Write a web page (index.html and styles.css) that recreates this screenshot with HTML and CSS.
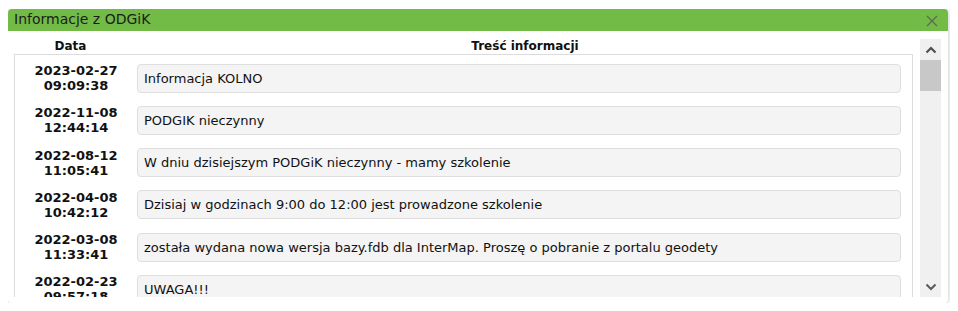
FILE: index.html
```html
<!DOCTYPE html>
<html lang="pl">

<head>
    <meta charset="UTF-8">
    <meta name="viewport" content="width=device-width, initial-scale=1.0">
    <title>Informacje z ODGiK</title>
    <link rel="stylesheet" href="styles.css">
</head>

<body>
    <div class="dialog">
        <div class="titlebar">
            <span class="title">Informacje z ODGiK</span>
            <span class="close">
                <svg width="12" height="12" viewBox="0 0 12 12">
                    <path d="M1 1 L11 11 M11 1 L1 11" stroke="#5d6b55" stroke-width="1.3" fill="none" />
                </svg>
            </span>
        </div>
        <div class="content">
            <div class="list">
                <div class="head">
                    <div class="head-date">Data</div>
                    <div class="head-text">Treść informacji</div>
                </div>
                <div class="rows">
                    <div class="row">
                        <div class="date">2023-02-27<br>09:09:38</div>
                        <div class="msg">Informacja KOLNO</div>
                    </div>
                    <div class="row">
                        <div class="date">2022-11-08<br>12:44:14</div>
                        <div class="msg">PODGIK nieczynny</div>
                    </div>
                    <div class="row">
                        <div class="date">2022-08-12<br>11:05:41</div>
                        <div class="msg">W dniu dzisiejszym PODGiK nieczynny - mamy szkolenie</div>
                    </div>
                    <div class="row">
                        <div class="date">2022-04-08<br>10:42:12</div>
                        <div class="msg">Dzisiaj w godzinach 9:00 do 12:00 jest prowadzone szkolenie</div>
                    </div>
                    <div class="row">
                        <div class="date">2022-03-08<br>11:33:41</div>
                        <div class="msg">została wydana nowa wersja bazy.fdb dla InterMap. Proszę o pobranie z portalu geodety</div>
                    </div>
                    <div class="row">
                        <div class="date">2022-02-23<br>09:57:18</div>
                        <div class="msg">UWAGA!!!</div>
                    </div>
                </div>
            </div>
            <div class="scrollbar">
                <div class="arrow">
                    <svg width="12" height="8" viewBox="0 0 12 8">
                        <path d="M1.5 6.5 L6 2 L10.5 6.5" stroke="#4f4f4f" stroke-width="2.2" fill="none" />
                    </svg>
                </div>
                <div class="thumb"></div>
                <div class="track"></div>
                <div class="arrow">
                    <svg width="12" height="8" viewBox="0 0 12 8">
                        <path d="M1.5 1.5 L6 6 L10.5 1.5" stroke="#5a5a5a" stroke-width="2" fill="none" />
                    </svg>
                </div>
            </div>
        </div>
    </div>
</body>

</html>
```

FILE: styles.css
```css
body {
    margin: 9px 8px 0;
    background: #fff;
    font-family: "DejaVu Sans", Verdana, sans-serif;
    color: #111;
}

.dialog {
    width: 940px;
    height: 294px;
    background: #fff;
    border-radius: 4px;
    box-shadow: 0 0 6px rgba(0, 0, 0, 0.25);
    display: flex;
    flex-direction: column;
    overflow: hidden;
}

.titlebar {
    height: 22px;
    background: #72bb46;
    display: flex;
    align-items: center;
    justify-content: space-between;
    padding: 0 10px 2px 6px;
    box-sizing: border-box;
}

.title {
    font-size: 14px;
    line-height: 20px;
    color: #1c1c1c;
}

.close {
    display: flex;
    margin-top: 4px;
}

.content {
    flex: 1;
    display: flex;
    gap: 7px;
    padding: 8px 7px 6px 6px;
    min-height: 0;
}

.list {
    flex: 1;
    display: flex;
    flex-direction: column;
    min-height: 0;
}

.head {
    display: flex;
    font-size: 12px;
    font-weight: bold;
    line-height: 15px;
    height: 15px;
}

.head-date {
    width: 113px;
    margin-right: 10px;
    text-align: center;
}

.head-text {
    flex: 1;
    text-align: center;
}

.rows {
    flex: 1;
    border: 1px solid #dcdcdc;
    border-bottom: none;
    overflow: hidden;
    padding: 8px 11px 0 0;
}

.row {
    display: flex;
    align-items: center;
    margin-bottom: 12.3px;
}

.date {
    width: 122px;
    text-align: center;
    font-size: 13px;
    font-weight: bold;
    line-height: 15px;
    color: #111;
}

.msg {
    flex: 1;
    height: 29px;
    box-sizing: border-box;
    border: 1px solid #dedede;
    border-radius: 4px;
    background: #f4f4f4;
    font-size: 13px;
    line-height: 27px;
    padding: 0 6px;
    white-space: nowrap;
    overflow: hidden;
}

.scrollbar {
    width: 21px;
    background: #f0f0f0;
    display: flex;
    flex-direction: column;
}

.arrow {
    height: 21px;
    display: flex;
    align-items: center;
    justify-content: center;
}

.thumb {
    height: 31px;
    background: #c8c8c8;
}

.track {
    flex: 1;
}
```
